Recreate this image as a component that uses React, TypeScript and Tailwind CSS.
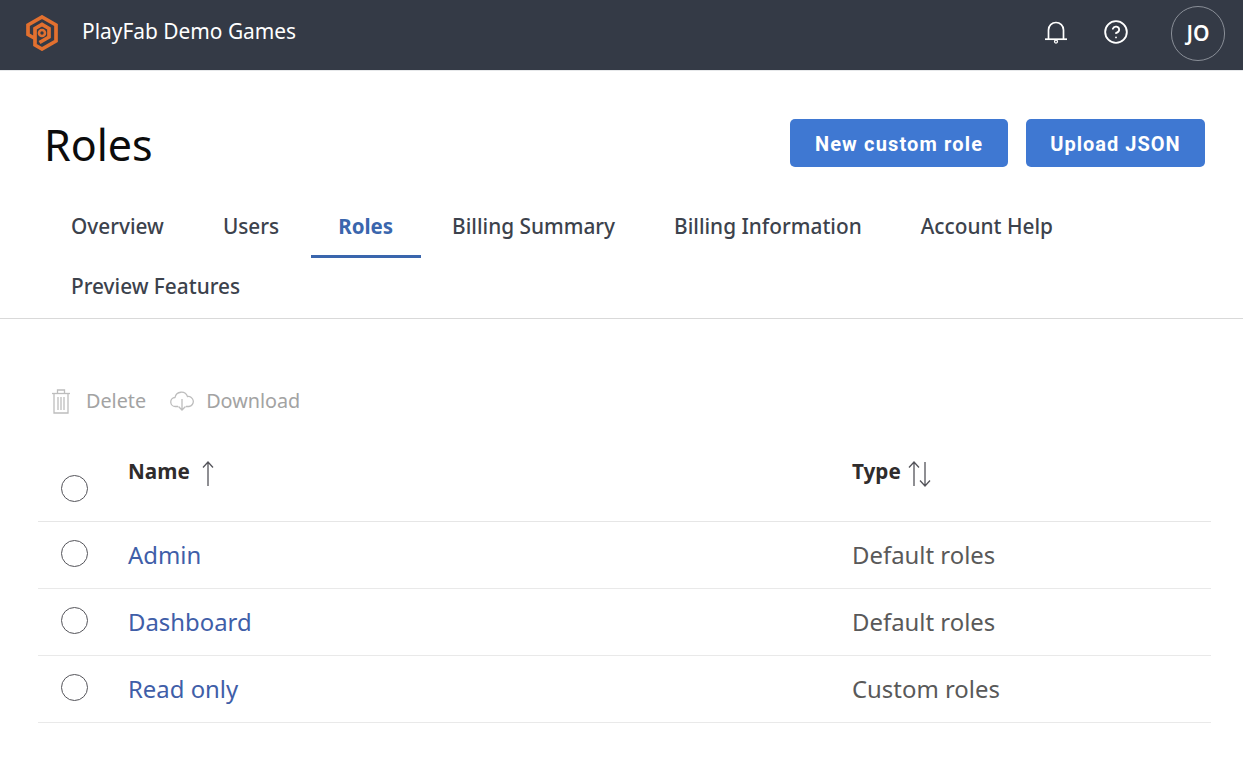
import { CircleHelp } from "lucide-react";

const tabs = ["Overview", "Users", "Roles", "Billing Summary", "Billing Information", "Account Help", "Preview Features"];

const rows = [
  { name: "Admin", type: "Default roles" },
  { name: "Dashboard", type: "Default roles" },
  { name: "Read only", type: "Custom roles" },
];

function Logo() {
  return (
    <svg width="34" height="36" viewBox="0 0 34 36" fill="none" stroke="#e2702f" strokeWidth="3.7">
      <path d="M10 23.5 L3 19.5 L3 10 L17 2 L31 10 L31 26 L17 34 L10 30 L10 13.5 L17 9.5 L24 13.5 L24 22 L14.5 27.5" />
      <circle cx="17" cy="18" r="3" strokeWidth="2.6" />
    </svg>
  );
}

function BellIcon() {
  return (
    <svg width="24" height="26" viewBox="0 0 24 26" fill="none" stroke="white" strokeWidth="1.7">
      <path d="M4.5 19 V10 a7.5 7.5 0 0 1 15 0 V19" />
      <path d="M1 19.2 H23" />
      <circle cx="12" cy="21.6" r="1.5" strokeWidth="1.3" />
    </svg>
  );
}

function TrashIcon() {
  return (
    <svg width="20" height="25" viewBox="0 0 20 25" fill="none" stroke="#bdbdbd" strokeWidth="1.3">
      <path d="M1 4.5 H19" />
      <path d="M6.5 4 V1 H13.5 V4" />
      <path d="M3 4.5 V24 H17 V4.5" />
      <path d="M7 8 V21 M10 8 V21 M13 8 V21" />
    </svg>
  );
}

function CloudIcon() {
  return (
    <svg width="24" height="22" viewBox="0 0 24 22" fill="none" stroke="#bdbdbd" strokeWidth="1.3">
      <path d="M8 16.5 H5.5 a4.5 4.5 0 0 1 -.5 -9 a6.5 6.5 0 0 1 12.5 -1 a5 5 0 0 1 1.5 10 H16" />
      <path d="M12 9 V20 M8.5 16.5 L12 20 L15.5 16.5" />
    </svg>
  );
}

function SortArrow({ down }: { down?: boolean }) {
  return (
    <svg width="12" height="26" viewBox="0 0 12 26" fill="none" stroke="#54545a" strokeWidth="1.3">
      {down ? <path d="M6 1 V25 M1 19.5 L6 25 L11 19.5" /> : <path d="M6 1 V25 M1 6.5 L6 1 L11 6.5" />}
    </svg>
  );
}

function Radio() {
  return <span className="block w-[27px] h-[27px] rounded-full border-[1.75px] border-[#54545a]" />;
}

export default function App() {
  return (
    <div className="min-h-[757px] bg-white font-['Noto_Sans','Open_Sans',sans-serif]">
      {/* top bar */}
      <header className="h-[71px] bg-[#343a46] flex items-center pl-[25px] pr-[18px] pb-[4px] border-b border-[#e6e8ea]">
        <Logo />
        <span className="ml-[23px] mb-[2px] text-[20.9px] text-white">PlayFab Demo Games</span>
        <div className="ml-auto flex items-center">
          <BellIcon />
          <CircleHelp size={26} strokeWidth={1.7} className="text-white ml-[35px] -mt-[2px]" />
          <span className="ml-[42px] w-[54px] h-[55px] rounded-full border border-[#8a8f98] flex items-center justify-center pt-[2px] text-white font-semibold text-[21px]">
            JO
          </span>
        </div>
      </header>

      {/* title */}
      <div className="flex items-start justify-between pl-[44px] pr-[38px] pt-[47px]">
        <h1 className="text-[43px] leading-[54px] text-[#0c0c0c]">Roles</h1>
        <div className="flex gap-[18px] mt-[1px]">
          <button className="h-[48px] w-[218px] pt-[2px] rounded-[5px] bg-[#3f78d2] text-white font-['Roboto',sans-serif] font-bold text-[20px] tracking-[1.15px]">
            New custom role
          </button>
          <button className="h-[48px] w-[179px] pt-[2px] rounded-[5px] bg-[#3f78d2] text-white font-['Roboto',sans-serif] font-bold text-[20px] tracking-[1px]">
            Upload JSON
          </button>
        </div>
      </div>

      {/* tabs */}
      <nav className="mt-[26px] pl-[43.5px] pr-[100px] flex flex-wrap border-b border-[#d9d9d9]">
        {tabs.map((t) => (
          <a
            key={t}
            className={`h-[60px] px-[27.5px] mr-[4px] flex items-center border-b-[3px] ${
              t === "Roles"
                ? "font-bold text-[#3a66ad] border-[#3a66ad] text-[20.5px]"
                : "font-medium text-[#3c424c] border-transparent text-[20.8px]"
            }`}
          >
            {t}
          </a>
        ))}
      </nav>

      {/* actions */}
      <div className="mt-[66px] pl-[51px] flex items-center h-[32px] text-[19.8px] text-[#a3a3a3]">
        <TrashIcon />
        <span className="ml-[15px]">Delete</span>
        <span className="ml-[24px]">
          <CloudIcon />
        </span>
        <span className="ml-[12px]">Download</span>
      </div>

      {/* table */}
      <div className="ml-[38px] mr-[32px] mt-[19px]">
        <div className="h-[86px] flex border-b border-[#e6e6e6]">
          <div className="w-[90px] pl-[23px] pt-[39px]">
            <Radio />
          </div>
          <div className="w-[724px] flex items-start pt-[20px] text-[20.7px] font-bold text-[#2f2c2c]">
            Name
            <span className="ml-[12px] mt-[5px]">
              <SortArrow />
            </span>
          </div>
          <div className="flex items-start pt-[20px] text-[20.7px] font-bold text-[#2f2c2c]">
            Type
            <span className="ml-[7px] mt-[5px]">
              <SortArrow />
            </span>
            <span className="-ml-[1px] mt-[5px]">
              <SortArrow down />
            </span>
          </div>
        </div>
        {rows.map((r) => (
          <div key={r.name} className="h-[67px] flex items-center border-b border-[#e9e9e9]">
            <div className="w-[90px] pl-[23px] pb-[4px]">
              <Radio />
            </div>
            <a className="w-[724px] text-[23.9px] text-[#3f5ea8]">{r.name}</a>
            <span className="text-[23.9px] text-[#595959]">{r.type}</span>
          </div>
        ))}
      </div>
    </div>
  );
}
